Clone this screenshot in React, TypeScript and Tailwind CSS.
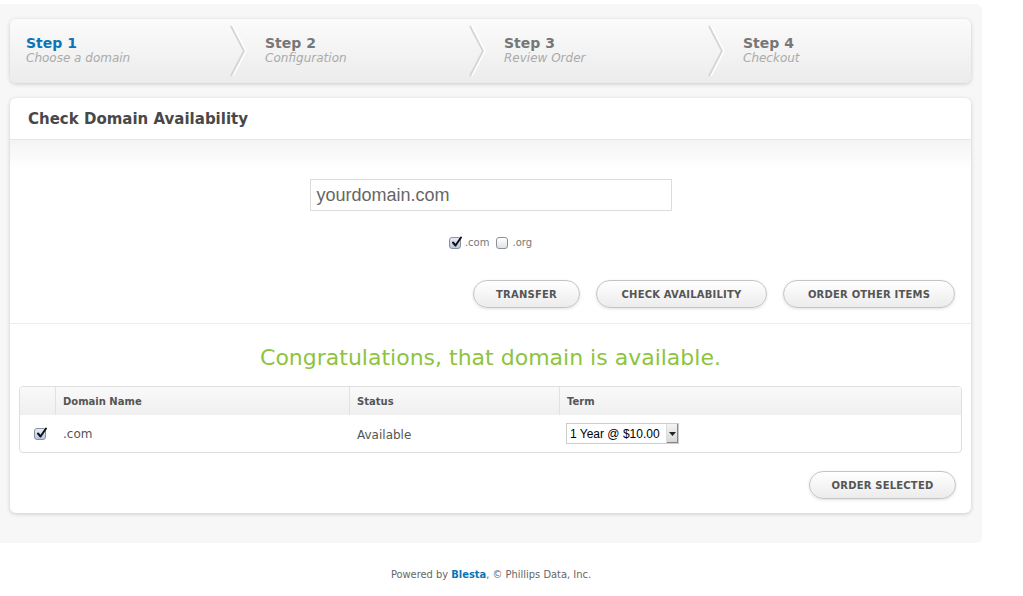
import React from 'react';

const steps = [
  { title: 'Step 1', sub: 'Choose a domain', active: true },
  { title: 'Step 2', sub: 'Configuration' },
  { title: 'Step 3', sub: 'Review Order' },
  { title: 'Step 4', sub: 'Checkout' },
];

function Chevron() {
  return (
    <svg width="18" height="52" viewBox="0 0 18 52" className="shrink-0">
      <path d="M2 1 L15 26 L2 51" fill="none" stroke="#d6d6d6" strokeWidth="2" />
      <path d="M4 1 L17 26 L4 51" fill="none" stroke="#ffffff" strokeWidth="1.5" />
    </svg>
  );
}

function Check({ checked }: { checked?: boolean }) {
  return (
    <span className="relative inline-flex h-[12px] w-[12px] items-center justify-center rounded-[3px] border border-[#8a8f99] bg-gradient-to-b from-[#e8eef8] to-[#b7c7e4]">
      {checked && (
        <svg width="12" height="12" viewBox="0 0 12 12" className="absolute -top-[2px] left-[1px]">
          <path d="M2 6.5 L4.5 9.5 L10 1.5" fill="none" stroke="#111" strokeWidth="2" strokeLinecap="round" strokeLinejoin="round" />
        </svg>
      )}
      {!checked && <span className="absolute inset-0 rounded-[3px] bg-gradient-to-b from-white to-[#e2e2e2]" />}
    </span>
  );
}

function Btn({ label, w }: { label: string; w: string }) {
  return (
    <button
      className={`${w} h-[28px] rounded-full border border-[#c4c4c4] bg-gradient-to-b from-white to-[#ececec] text-[10px] font-bold tracking-[0.2px] text-[#555] shadow-[0_1px_3px_rgba(0,0,0,0.12)]`}
    >
      {label}
    </button>
  );
}

export default function App() {
  return (
    <div className="min-h-[596px] bg-white font-['DejaVu_Sans',Verdana,sans-serif]">
      <div className="pt-[4px]">
        <div className="w-[982px] rounded-r-[6px] bg-[#f7f7f7] pt-[15px] pb-[30px] pl-[10px] pr-[11px]">
          {/* steps */}
          <div className="flex h-[64px] items-center rounded-[6px] bg-gradient-to-b from-[#fbfbfb] to-[#ececec] shadow-[0_1px_4px_rgba(0,0,0,0.18)]">
            {steps.map((s, i) => (
              <div key={s.title} className="flex h-full w-[239px] items-center justify-between">
                <div className="pl-[16px] leading-[15px]">
                  <div className={`text-[14px] font-bold ${s.active ? 'text-[#0b74b8]' : 'text-[#777]'}`}>{s.title}</div>
                  <div className="text-[12px] italic text-[#aaa]">{s.sub}</div>
                </div>
                {i < 3 && (
                  <div className="pr-[2px]">
                    <Chevron />
                  </div>
                )}
              </div>
            ))}
          </div>

          {/* main panel */}
          <div className="mt-[15px] rounded-[6px] bg-white shadow-[0_1px_4px_rgba(0,0,0,0.18)]">
            <div className="flex h-[42px] items-center border-b border-[#e6e6e6] pl-[18px] pt-[1px]">
              <h2 className="text-[15px] font-bold text-[#484848]">Check Domain Availability</h2>
            </div>
            <div className="bg-gradient-to-b from-[#f4f4f4] to-white to-[30px] px-[16px]">
              <div className="flex flex-col items-center pt-[39px]">
                <div className="flex h-[32px] w-[362px] items-center border border-[#dcdcdc] bg-white pl-[6px] pt-[1px] font-['Liberation_Sans',Arial,sans-serif] text-[18px] text-[#666]">
                  yourdomain.com
                </div>
                <div className="mt-[24px] flex items-center text-[10px] text-[#777]">
                  <Check checked />
                  <span className="ml-[4px]">.com</span>
                  <span className="ml-[7px]" />
                  <Check />
                  <span className="ml-[4px]">.org</span>
                </div>
              </div>
              <div className="mt-[30px] flex justify-end gap-[16px] pb-[15px] pr-[0px]">
                <Btn label="TRANSFER" w="w-[107px]" />
                <Btn label="CHECK AVAILABILITY" w="w-[171px]" />
                <Btn label="ORDER OTHER ITEMS" w="w-[172px]" />
              </div>
            </div>
            <div className="border-t border-[#ececec] px-[9px] pb-[14px]">
              <div className="pt-[17px] pb-[12px] text-center text-[22px] text-[#8cc43e]">
                Congratulations, that domain is available.
              </div>
              <table className="w-full border-separate border-spacing-0 overflow-hidden rounded-[4px] border border-[#dedede] text-left">
                <thead>
                  <tr className="h-[28px] bg-gradient-to-b from-[#f9f9f9] to-[#f0f0f0] text-[10px] font-bold text-[#555]">
                    <th className="w-[36px] border-r border-[#e2e2e2]" />
                    <th className="w-[294px] border-r border-[#e2e2e2] pl-[7px]">Domain Name</th>
                    <th className="w-[210px] border-r border-[#e2e2e2] pl-[7px]">Status</th>
                    <th className="pl-[7px]">Term</th>
                  </tr>
                </thead>
                <tbody>
                  <tr className="h-[37px] text-[12px] text-[#555]">
                    <td className="pl-[14px]">
                      <div className="flex items-center">
                        <Check checked />
                      </div>
                    </td>
                    <td className="pl-[7px]">.com</td>
                    <td className="pl-[7px] pt-[2px]">Available</td>
                    <td className="pl-[6px]">
                      <div className="inline-flex h-[21px] items-center border border-[#ccc] bg-white font-['Liberation_Sans',Arial,sans-serif] text-[12px] text-black">
                        <span className="pl-[3px] pr-[6px]">1 Year @ $10.00</span>
                        <span className="flex h-full w-[12px] items-center justify-center border-l border-[#ddd] bg-gradient-to-b from-[#f4f4f4] to-[#d6d6d6] shadow-[inset_-1px_-1px_0_#888]">
                          <svg width="7" height="4" viewBox="0 0 7 4"><path d="M0 0 H7 L3.5 4 Z" fill="#222" /></svg>
                        </span>
                      </div>
                    </td>
                  </tr>
                </tbody>
              </table>
              <div className="mt-[18px] flex justify-end pr-[6px]">
                <Btn label="ORDER SELECTED" w="w-[147px]" />
              </div>
            </div>
          </div>
        </div>
      </div>
      <div className="w-[982px] pt-[24px] text-center font-['DejaVu_Sans_Condensed','DejaVu_Sans',sans-serif] text-[11px] text-[#666]">
        Powered by <span className="font-bold text-[#0b74b8]">Blesta</span>, © Phillips Data, Inc.
      </div>
    </div>
  );
}
